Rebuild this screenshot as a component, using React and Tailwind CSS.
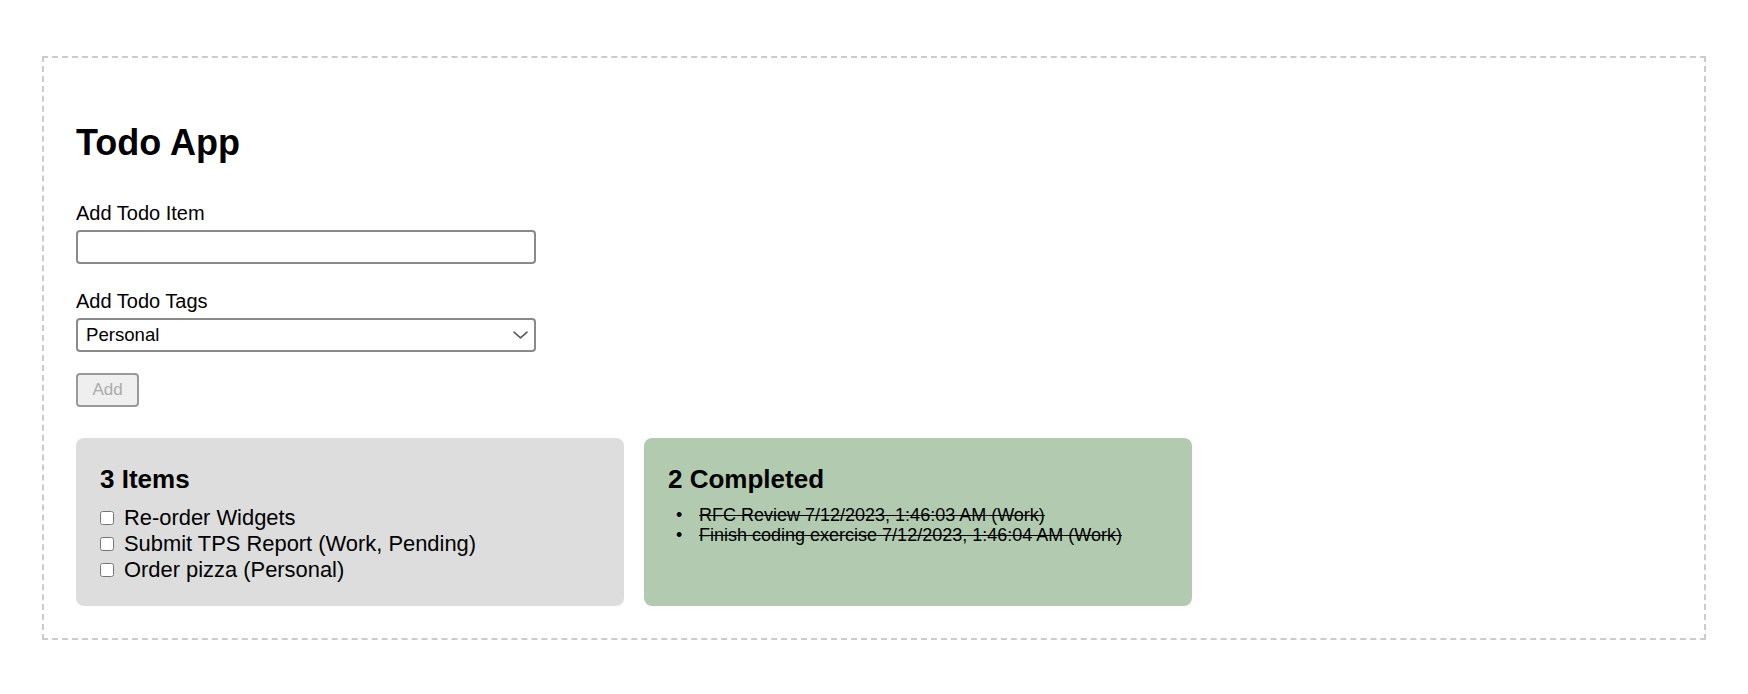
import React from 'react';

const todos = [
    { id: 1, text: 'Re-order Widgets', tags: [] },
    { id: 2, text: 'Submit TPS Report', tags: ['Work', 'Pending'] },
    { id: 3, text: 'Order pizza', tags: ['Personal'] },
];

const completed = [
    { id: 4, text: 'RFC Review', done: '7/12/2023, 1:46:03 AM', tags: ['Work'] },
    { id: 5, text: 'Finish coding exercise', done: '7/12/2023, 1:46:04 AM', tags: ['Work'] },
];

const withTags = (item) => (item.tags.length ? ` (${item.tags.join(', ')})` : '');

// Small chevron for the select, mac style
const Chevron = () => (
    <svg width="15" height="8" viewBox="0 0 15 8" fill="none" className="absolute right-[8px] top-[13px] pointer-events-none">
        <path d="M1 1.2L7.5 6.8L14 1.2" stroke="#5a5a5a" strokeWidth="1.6" strokeLinecap="round" strokeLinejoin="round" />
    </svg>
);

const App = () => {
    const [item, setItem] = React.useState('');
    const [tag, setTag] = React.useState('Personal');

    return (
        <div className="min-h-screen bg-white pt-[56px] px-[42px] font-['Liberation_Sans',Arial,sans-serif] text-black">
            <div className="border-2 border-dashed border-[#cccccc] pt-[65px] px-8 pb-8">
                <h1 className="text-[36px] leading-[40px] font-bold">Todo App</h1>

                <div className="mt-[39px]">
                    <label className="block text-[20px] leading-[23px]">Add Todo Item</label>
                    <input
                        value={item}
                        onChange={(e) => setItem(e.target.value)}
                        className="mt-[5px] block w-[460px] h-[34px] border-2 border-[#8a8a8a] rounded-[4px] px-2 text-[18px] outline-none"
                    />
                </div>

                <div className="mt-[26px]">
                    <label className="block text-[20px] leading-[23px]">Add Todo Tags</label>
                    <div className="relative mt-[5px] w-[460px]">
                        <select
                            value={tag}
                            onChange={(e) => setTag(e.target.value)}
                            className="appearance-none block w-full h-[34px] border-2 border-[#8a8a8a] rounded-[4px] pl-[8px] pr-8 bg-white text-[18.6px] font-['Liberation_Sans',Arial,sans-serif] outline-none"
                        >
                            <option>Personal</option>
                            <option>Work</option>
                            <option>Pending</option>
                        </select>
                        <Chevron />
                    </div>
                </div>

                <button
                    disabled={!item}
                    className="mt-[21px] block w-[63px] h-[34px] border-2 border-[#9a9a9a] rounded-[4px] bg-[#efefef] text-[#ababab] text-[17px]"
                >
                    Add
                </button>

                <div className="mt-[31px] flex gap-5">
                    <div className="w-[548px] h-[168px] bg-[#dddddd] rounded-[8px] pt-[26px] px-6">
                        <h2 className="text-[26px] leading-[30px] font-bold">{todos.length} Items</h2>
                        <ul className="mt-[11px]">
                            {todos.map(t => (
                                <li key={t.id} className="flex items-center h-[26px] text-[21.9px]">
                                    <input type="checkbox" className="m-0 mr-[10px] w-[14px] h-[14px]" />
                                    <span>{t.text}{withTags(t)}</span>
                                </li>
                            ))}
                        </ul>
                    </div>

                    <div className="w-[548px] h-[168px] bg-[#b2cbb0] rounded-[8px] pt-[26px] px-6">
                        <h2 className="text-[26px] leading-[30px] font-bold">{completed.length} Completed</h2>
                        <ul className="mt-[11px] pl-[8px]">
                            {completed.map(t => (
                                <li key={t.id} className="flex text-[18px] leading-[20px]">
                                    <span className="w-[23px] shrink-0">•</span>
                                    <span className="line-through">{t.text} {t.done}{withTags(t)}</span>
                                </li>
                            ))}
                        </ul>
                    </div>
                </div>
            </div>
        </div>
    );
};

export default App;
